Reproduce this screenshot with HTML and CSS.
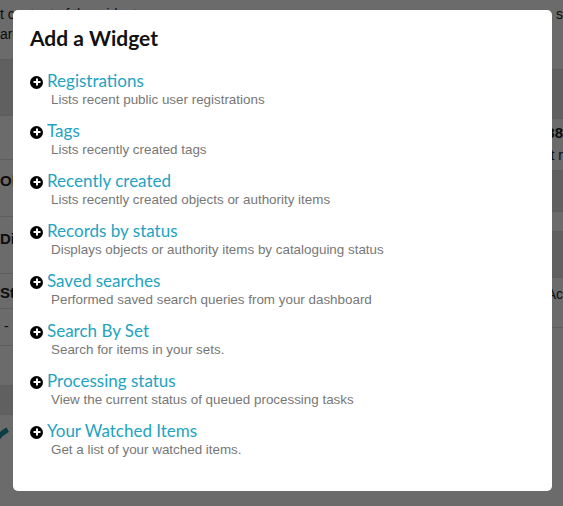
FILE: index.html
```html
<!DOCTYPE html>
<html>
<head>
<meta charset="utf-8">
<link rel="stylesheet" href="styles.css">
</head>
<body>
<div class="page">
  <div class="col left">
    <div class="row r1">t content of the widget</div>
    <div class="row r2">ard</div>
    <div class="band b1"></div>
    <div class="row r3"></div>
    <div class="row r4 strong">Ob</div>
    <div class="row r5 strong">Di</div>
    <div class="row r6 strong">St</div>
    <div class="row r7">&nbsp;-</div>
    <div class="row r8"></div>
    <div class="band b2"></div>
    <div class="row r9">
      <svg class="ring" width="80" height="80" viewBox="0 0 80 80"><circle cx="40" cy="40" r="28" fill="none" stroke="#1f8fa3" stroke-width="5" stroke-dasharray="16 14 16 200" transform="rotate(150 40 40)"/></svg>
    </div>
  </div>
  <div class="col right">
    <div class="row q1">s</div>
    <div class="row q2"></div>
    <div class="band c1"></div>
    <div class="row q3 strong">88</div>
    <div class="row q4">t r</div>
    <div class="band c2"></div>
    <div class="row q5"></div>
    <div class="band c3"></div>
    <div class="row q6">Ac</div>
  </div>
</div>

<div class="overlay">
  <div class="modal">
    <h2 class="title">Add a Widget</h2>
    <ul class="list">
      <li class="item">
        <div class="head"><span class="plus"></span><a class="name">Registrations</a></div>
        <div class="desc">Lists recent public user registrations</div>
      </li>
      <li class="item">
        <div class="head"><span class="plus"></span><a class="name">Tags</a></div>
        <div class="desc">Lists recently created tags</div>
      </li>
      <li class="item">
        <div class="head"><span class="plus"></span><a class="name">Recently created</a></div>
        <div class="desc">Lists recently created objects or authority items</div>
      </li>
      <li class="item">
        <div class="head"><span class="plus"></span><a class="name">Records by status</a></div>
        <div class="desc">Displays objects or authority items by cataloguing status</div>
      </li>
      <li class="item">
        <div class="head"><span class="plus"></span><a class="name">Saved searches</a></div>
        <div class="desc">Performed saved search queries from your dashboard</div>
      </li>
      <li class="item">
        <div class="head"><span class="plus"></span><a class="name">Search By Set</a></div>
        <div class="desc">Search for items in your sets.</div>
      </li>
      <li class="item">
        <div class="head"><span class="plus"></span><a class="name">Processing status</a></div>
        <div class="desc">View the current status of queued processing tasks</div>
      </li>
      <li class="item">
        <div class="head"><span class="plus"></span><a class="name">Your Watched Items</a></div>
        <div class="desc">Get a list of your watched items.</div>
      </li>
    </ul>
  </div>
</div>
</body>
</html>
```

FILE: styles.css
```css
html, body {
  margin: 0;
  padding: 0;
}
body {
  width: 563px;
  height: 506px;
  overflow: hidden;
  background: #fff;
  font-family: "Liberation Sans", Arial, sans-serif;
}
.page {
  display: grid;
  grid-template-columns: 1fr 1fr;
  height: 506px;
}
.col {
  display: flex;
  flex-direction: column;
  font-size: 14px;
  line-height: 16px;
  color: #222;
}
.right {
  align-items: flex-end;
}
.row {
  border-bottom: 1px solid #ddd;
  white-space: nowrap;
  width: 100%;
  box-sizing: border-box;
}
.right .row { text-align: right; }
.strong { font-weight: bold; font-size: 15px; }
.band { background: #e4e4e4; border-bottom: 1px solid #ddd; }

.r1 { height: 24px; padding-top: 6px; border: none; }
.r2 { height: 36px; padding-top: 2px; }
.b1 { height: 55px; }
.r3 { height: 44px; }
.r4 { height: 57px; padding-top: 13px; }
.r5 { height: 57px; padding-top: 14px; }
.r6 { height: 35px; padding-top: 11px; }
.r7 { height: 37px; padding-top: 9px; }
.r8 { height: 40px; }
.b2 { height: 28px; }
.r9 { height: 70px; position: relative; overflow: hidden; border: none; }
.ring { position: absolute; left: -20px; top: 0; }

.q1 { height: 24px; padding-top: 6px; border: none; }
.q2 { height: 46px; }
.c1 { height: 48px; width: 100%; }
.q3 { height: 24px; padding-top: 6px; border: none; }
.q4 { height: 28px; padding-top: 4px; }
.c2 { height: 40px; width: 100%; }
.q5 { height: 20px; }
.c3 { height: 45px; width: 100%; }
.q6 { height: 50px; padding-top: 8px; }

.overlay {
  position: fixed;
  inset: 0;
  background: rgba(0, 0, 0, 0.58);
  padding: 10px 0 0 13px;
}
.modal {
  width: 539px;
  height: 481px;
  box-sizing: border-box;
  background: #fff;
  border-radius: 5px;
  padding: 15px 0 0 17px;
}
.title {
  margin: 0 0 18px;
  font-family: "Lato", sans-serif;
  font-weight: bold;
  font-size: 21px;
  line-height: 26px;
  color: #111;
}
.list {
  list-style: none;
  margin: 0;
  padding: 0;
  display: flex;
  flex-direction: column;
  gap: 11px;
}
.item {
  display: flex;
  flex-direction: column;
}
.head {
  display: flex;
  align-items: center;
  gap: 4px;
  height: 22px;
}
.plus {
  width: 13px;
  height: 13px;
  border-radius: 50%;
  background: #000;
  position: relative;
  margin-top: 4px;
  flex: none;
}
.plus::before, .plus::after {
  content: "";
  position: absolute;
  background: #fff;
  left: 50%;
  top: 50%;
  transform: translate(-50%, -50%);
}
.plus::before { width: 7px; height: 2px; }
.plus::after { width: 2px; height: 7px; }
.name {
  font-family: "Lato", sans-serif;
  font-size: 17px;
  color: #23a3c1;
  text-decoration: none;
}
.desc {
  padding-left: 21px;
  font-size: 13.4px;
  line-height: 17px;
  color: #777;
}
```
